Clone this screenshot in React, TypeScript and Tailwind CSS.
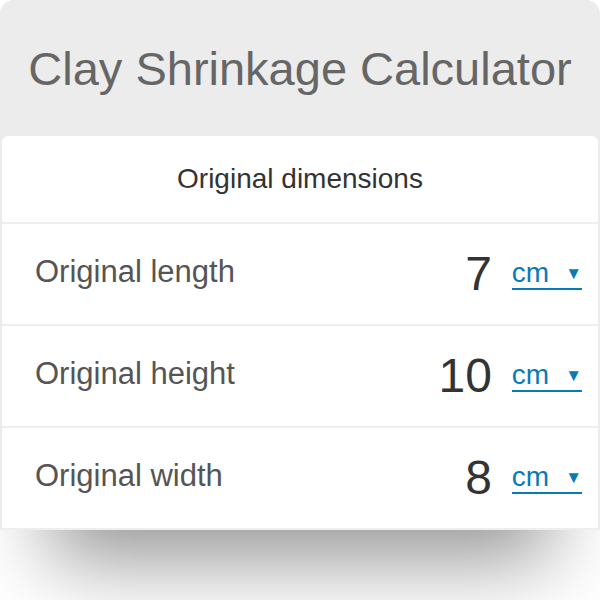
const rows = [
  { label: "Original length", value: "7" },
  { label: "Original height", value: "10" },
  { label: "Original width", value: "8" },
];

function UnitSelect() {
  return (
    <div className="flex items-center border-b-2 border-[#0a7ab6] text-[#0a7ab6] leading-none pb-[1px]">
      <span className="text-[28px]">cm</span>
      <span className="ml-[16px] text-[17px] pt-[2px]">▼</span>
    </div>
  );
}

export default function App() {
  return (
    <div className="w-[600px] h-[600px] bg-white overflow-hidden [font-family:'Liberation_Sans',Arial,sans-serif]">
      <div className="bg-[#ececec] rounded-t-[14px] px-[2px] shadow-[0_80px_76px_-50px_rgba(0,0,0,0.42)]">
        <div className="h-[136px] flex items-center justify-center">
          <h1 className="text-[47px] text-[#666666] leading-none">Clay Shrinkage Calculator</h1>
        </div>
        <div className="bg-white rounded-t-[6px]">
          <div className="h-[86px] flex items-center justify-center">
            <span className="text-[28px] text-[#333333]">Original dimensions</span>
          </div>
          {rows.map((r) => (
            <div
              key={r.label}
              className="h-[102px] border-t-2 border-[#eeeeee] flex items-center justify-between pl-[33px] pr-[16px]"
            >
              <span className="text-[31px] text-[#555555] mb-[4px]">{r.label}</span>
              <div className="flex items-center gap-[20px]">
                <span className="text-[48px] text-[#333333] leading-none">{r.value}</span>
                <UnitSelect />
              </div>
            </div>
          ))}
          <div className="h-[2px] bg-[#eeeeee]" />
        </div>
      </div>
    </div>
  );
}
